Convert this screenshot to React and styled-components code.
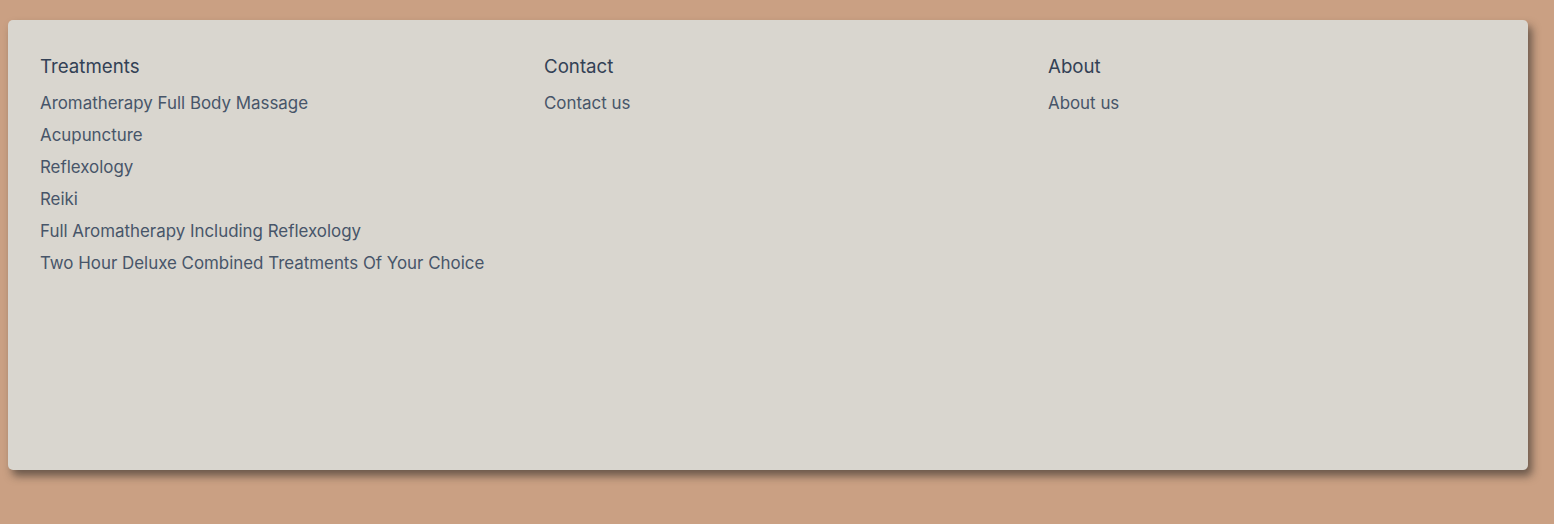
import styled, { createGlobalStyle } from 'styled-components'

const GlobalStyle = createGlobalStyle`
  html, body {
    margin: 0;
    background: #caa083;
    font-family: Inter, "Noto Sans", sans-serif;
  }
`

const Page = styled.div`
  min-height: 100vh;
  box-sizing: border-box;
  padding: 20px 26px 54px 8px;
`

const Card = styled.footer`
  box-sizing: border-box;
  height: 450px;
  padding: 33px 32px 32px;
  background: #d9d6cf;
  border-radius: 5px;
  box-shadow: 4px 6px 8px rgba(30, 30, 30, 0.55);
  display: grid;
  grid-template-columns: 504px 504px 1fr;
  align-content: start;
`

const Column = styled.div`
  display: flex;
  flex-direction: column;
`

const Heading = styled.h3`
  margin: 0;
  font-size: 18.7px;
  line-height: 28px;
  font-weight: 400;
  color: #334155;
`

const List = styled.ul`
  list-style: none;
  margin: 10px 0 0;
  padding: 0;
  display: flex;
  flex-direction: column;
  gap: 8px;
`

const Link = styled.a`
  font-size: 16.9px;
  line-height: 24px;
  color: #475569;
  text-decoration: none;
`

const columns = [
  {
    title: 'Treatments',
    links: [
      'Aromatherapy Full Body Massage',
      'Acupuncture',
      'Reflexology',
      'Reiki',
      'Full Aromatherapy Including Reflexology',
      'Two Hour Deluxe Combined Treatments Of Your Choice',
    ],
  },
  { title: 'Contact', links: ['Contact us'] },
  { title: 'About', links: ['About us'] },
]

export default function App() {
  return (
    <>
      <GlobalStyle />
      <Page>
        <Card>
          {columns.map(col => (
            <Column key={col.title}>
              <Heading>{col.title}</Heading>
              <List>
                {col.links.map(l => (
                  <li key={l}>
                    <Link href='#'>{l}</Link>
                  </li>
                ))}
              </List>
            </Column>
          ))}
        </Card>
      </Page>
    </>
  )
}
